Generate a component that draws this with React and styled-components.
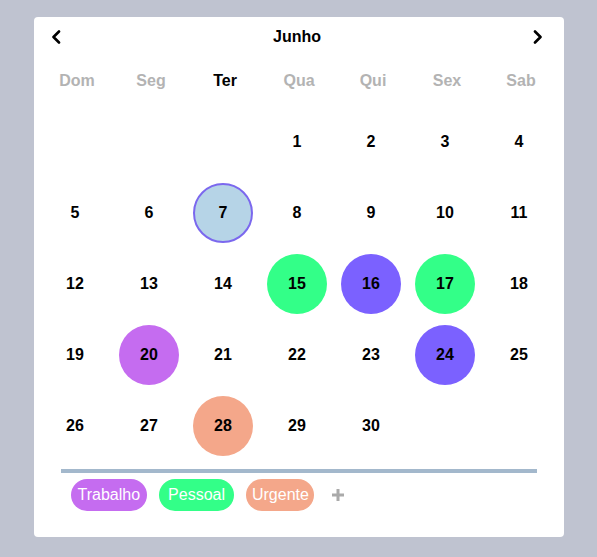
import React from "react";
import styled, { createGlobalStyle } from "styled-components";

const GlobalStyle = createGlobalStyle`
  html, body {
    margin: 0;
    padding: 0;
    background: #bfc3d0;
    font-family: "Liberation Sans", Arial, sans-serif;
  }
`;

const Page = styled.div`
  width: 597px;
  height: 557px;
  padding-top: 17px;
  padding-left: 34px;
  box-sizing: border-box;
`;

const Card = styled.div`
  width: 530px;
  height: 520px;
  background: #fff;
  border-radius: 4px;
  padding-top: 11px;
  box-sizing: border-box;
  display: flex;
  flex-direction: column;
`;

const Header = styled.div`
  height: 18px;
  display: flex;
  align-items: center;
  justify-content: space-between;
  padding: 0 20px 0 16px;
`;

const NavButton = styled.button`
  border: 0;
  background: none;
  padding: 0;
  width: 12px;
  height: 18px;
  display: flex;
  align-items: center;
  justify-content: center;
  cursor: pointer;
`;

const Month = styled.div`
  font-weight: bold;
  font-size: 16px;
  color: #000;
`;

const WeekRow = styled.div`
  display: grid;
  grid-template-columns: repeat(7, 74px);
  margin: 26px 0 0 6px;
  height: 18px;
  align-items: center;
`;

const WeekDay = styled.div`
  text-align: center;
  font-weight: bold;
  font-size: 16px;
  color: ${(p) => (p.$active ? "#000" : "#b3b3b3")};
`;

const DayGrid = styled.div`
  display: grid;
  grid-template-columns: repeat(7, 74px);
  grid-auto-rows: 71px;
  margin: 16px 0 0 4px;
`;

const Cell = styled.div`
  display: flex;
  align-items: center;
  justify-content: center;
`;

const Day = styled.div`
  width: 60px;
  height: 60px;
  border-radius: 50%;
  box-sizing: border-box;
  display: flex;
  align-items: center;
  justify-content: center;
  font-weight: bold;
  font-size: 16px;
  color: #000;
  background: ${(p) => p.$bg || "transparent"};
  border: ${(p) => (p.$today ? "2px solid #7b68ee" : "none")};
`;

const Divider = styled.div`
  width: 476px;
  height: 4px;
  background: #a3b8cc;
  margin: 8px auto 0;
`;

const TagRow = styled.div`
  display: flex;
  align-items: center;
  gap: 12px;
  padding: 6px 0 0 37px;
`;

const Tag = styled.span`
  height: 32px;
  line-height: 32px;
  border-radius: 16px;
  padding: 0 ${(p) => p.$pad}px;
  background: ${(p) => p.$bg};
  color: #fff;
  font-size: 16px;
`;

const AddTag = styled.button`
  border: 0;
  background: none;
  padding: 0;
  margin-left: 5px;
  display: flex;
  align-items: center;
  cursor: pointer;
`;

const colors = {
  work: "#c56cf0",
  personal: "#33ff88",
  urgent: "#f4a78a",
  event: "#7b61ff",
};

const marks = {
  15: colors.personal,
  16: colors.event,
  17: colors.personal,
  20: colors.work,
  24: colors.event,
  28: colors.urgent,
};

const weekDays = ["Dom", "Seg", "Ter", "Qua", "Qui", "Sex", "Sab"];

const Chevron = ({ dir }) => (
  <svg width="10" height="14" viewBox="0 0 10 14">
    <polyline
      points={dir === "left" ? "8,1.5 2.5,7 8,12.5" : "2,1.5 7.5,7 2,12.5"}
      fill="none"
      stroke="#000"
      strokeWidth="2.6"
      strokeLinecap="round"
      strokeLinejoin="round"
    />
  </svg>
);

const Plus = () => (
  <svg width="14" height="14" viewBox="0 0 14 14">
    <path d="M7 1v12M1 7h12" stroke="#aaa" strokeWidth="3" />
  </svg>
);

export default function App() {
  const cells = [];
  for (let i = 0; i < 3; i++) cells.push(null);
  for (let d = 1; d <= 30; d++) cells.push(d);

  return (
    <>
      <GlobalStyle />
      <Page>
        <Card>
          <Header>
            <NavButton>
              <Chevron dir="left" />
            </NavButton>
            <Month>Junho</Month>
            <NavButton>
              <Chevron dir="right" />
            </NavButton>
          </Header>
          <WeekRow>
            {weekDays.map((w, i) => (
              <WeekDay key={w} $active={i === 2}>
                {w}
              </WeekDay>
            ))}
          </WeekRow>
          <DayGrid>
            {cells.map((d, i) => (
              <Cell key={i}>
                {d && (
                  <Day $bg={d === 7 ? "#b6d4e7" : marks[d]} $today={d === 7}>
                    {d}
                  </Day>
                )}
              </Cell>
            ))}
          </DayGrid>
          <Divider />
          <TagRow>
            <Tag $bg={colors.work} $pad={6.5}>Trabalho</Tag>
            <Tag $bg={colors.personal} $pad={9.5}>Pessoal</Tag>
            <Tag $bg={colors.urgent} $pad={5.5}>Urgente</Tag>
            <AddTag>
              <Plus />
            </AddTag>
          </TagRow>
        </Card>
      </Page>
    </>
  );
}
